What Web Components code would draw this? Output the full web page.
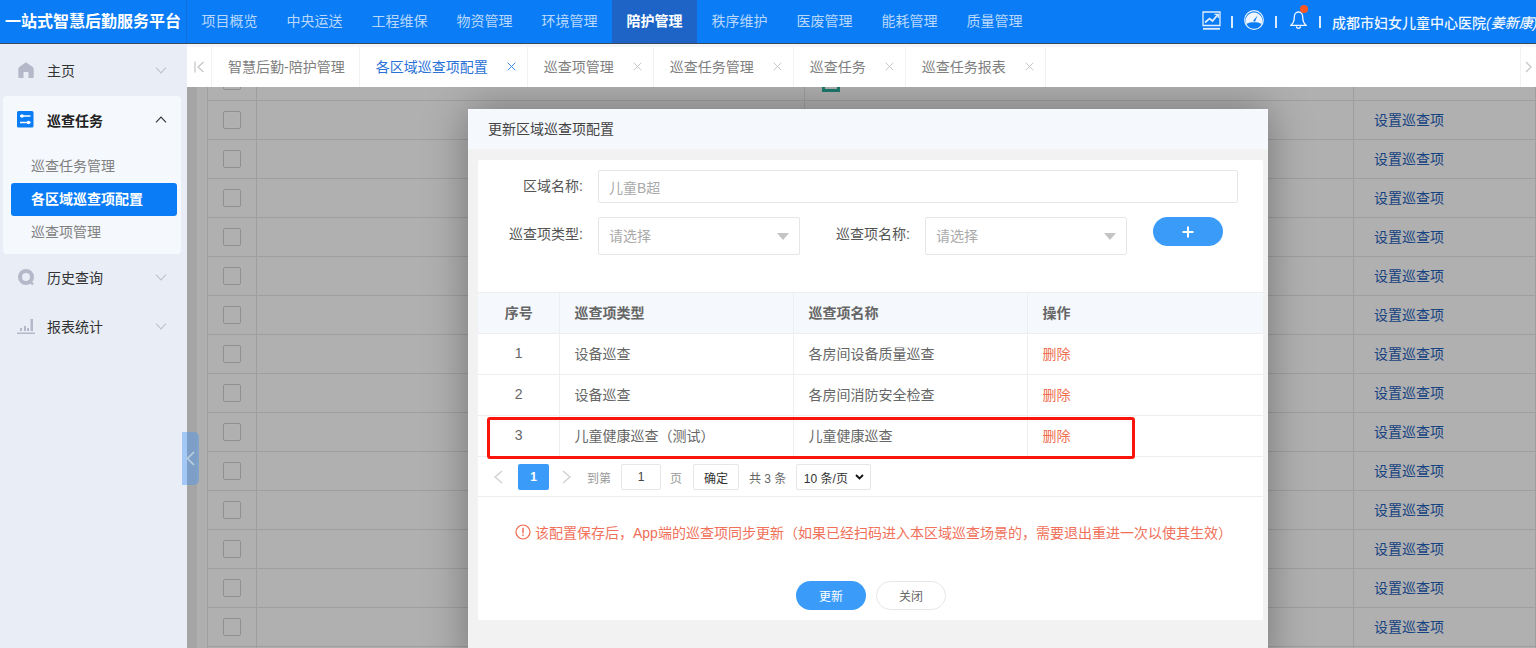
<!DOCTYPE html>
<html lang="zh"><head><meta charset="utf-8"><title>更新区域巡查项配置</title>
<style>
html,body{margin:0;height:100%;overflow:hidden}
body{font:14px "Liberation Sans","Noto Sans CJK SC",sans-serif;color:#666;background:#e9edf6}
app-shell{width:1536px;height:648px}
</style></head><body>
<app-shell>
  <app-header slot="header"></app-header>
  <side-nav slot="side"></side-nav>
  <tab-bar slot="tabs"></tab-bar>
  <grid-back slot="content"></grid-back>
  <area-modal slot="modal"></area-modal>
</app-shell>
<script>
const el=(name,html,setup)=>{customElements.define(name,class extends HTMLElement{
  connectedCallback(){ if(this.shadowRoot) return; const r=this.attachShadow({mode:'open'}); r.innerHTML=html; setup&&setup(r,this);} });};
const chev=(up)=>`<svg width="12" height="7" viewBox="0 0 12 7" fill="none" stroke="currentColor" stroke-width="1.1"><path d="${up?'M1 6.3 6 1l5 5.3':'M1 .7 6 6l5-5.3'}"/></svg>`;

el('app-shell',`<style>
:host{display:grid;grid-template-columns:187px 1fr;grid-template-rows:44px 43px 1fr;position:relative;overflow:hidden}
::slotted([slot=header]){grid-column:1/3}
::slotted([slot=side]){grid-row:2/4}
.body{grid-column:2;grid-row:3;position:relative;overflow:hidden;min-height:0}
.tabs{grid-column:2;grid-row:2;min-width:0;z-index:2}
.handle{position:absolute;left:182px;top:432px;width:17px;height:53px;background:rgba(70,150,245,.42);border-radius:0 5px 5px 0;display:flex;align-items:center;justify-content:center;color:rgba(215,225,235,.75);z-index:3}
</style>
<slot name="header"></slot><slot name="side"></slot>
<div class="tabs"><slot name="tabs"></slot></div>
<div class="body"><slot name="content"></slot><slot name="modal"></slot></div>
<div class="handle"><svg width="9" height="15" viewBox="0 0 9 15" fill="none" stroke="currentColor" stroke-width="1.5"><path d="M8 1 1.5 7.5 8 14"/></svg></div>`);

const navs=['项目概览','中央运送','工程维保','物资管理','环境管理','陪护管理','秩序维护','医废管理','能耗管理','质量管理'];
el('app-header',`<style>
:host{display:flex;height:44px;box-sizing:border-box;background:#0a7cf6;border-bottom:1px solid #3b4a5c;color:#fff}
.logo{width:187px;flex:none;box-sizing:border-box;font-size:16px;font-weight:700;line-height:43px;text-align:center;border-right:1px solid #0f6fdc;white-space:nowrap}
nav{display:flex}
a{width:85px;text-align:center;line-height:43px;color:#b8d8fd;flex:none}
a.on{background:#1d64c6;color:#fff;font-weight:700}
.right{margin-left:auto;display:flex;align-items:center;white-space:nowrap;width:335px;flex:none;overflow:hidden;box-sizing:border-box;padding:0 0 3px 1px}
.right>*{flex:none}
.sep{width:2px;height:12px;background:#dbe9fb;margin-top:3px}
.bell{position:relative;display:flex}
.bell i{position:absolute;left:10px;top:-5px;width:8px;height:8px;border-radius:50%;background:#ff5722}
.org{margin:3px 0 0 11px;color:#eef6ff;font-weight:500}
em{font-style:italic}
</style>
<div class="logo">一站式智慧后勤服务平台</div>
<nav>${navs.map(n=>`<a class="${n=='陪护管理'?'on':''}">${n}</a>`).join('')}</nav>
<div class="right">
<svg width="19" height="19" viewBox="0 0 19 19" fill="none" stroke="#e2eefe" stroke-width="1.3" style="margin-right:10px"><path d="M1 1h17v13.500H1z"/><path d="M1 17.800h17" stroke-width="1.800"/><path d="M3 11.500 7.500 7.500l3 2.500 5-6" stroke-width="1.700"/><path d="M12.500 3.400h3.800v3.600" stroke-width="1.300"/></svg>
<span class="sep" style="margin-right:11px"></span>
<svg width="20" height="20" viewBox="0 0 20 20" style="margin-right:11px"><circle cx="10" cy="10" r="9.300" fill="none" stroke="#e8f2ff" stroke-width="1.200"/><path d="M2.400 14A8 8 0 0 1 10 2.600 8 8 0 0 1 17.600 14C15.500 12.700 13 12.300 10 12.300S4.500 12.700 2.400 14z" fill="#f0f6ff"/><path d="M9 11 13.500 5.500 11 11.800z" fill="#0a7cf6"/></svg>
<span class="sep" style="margin-right:13px"></span>
<span class="bell" style="margin-right:12px"><svg width="17" height="20" viewBox="0 0 17 20" fill="none" stroke="#f0f6ff" stroke-width="1.300"><path d="M8.500 2C5.500 2 4.300 4.500 4.300 7c0 4-1 6.300-3.300 8.300h15c-2.300-2-3.300-4.300-3.300-8.300 0-2.500-1.200-5-4.200-5z"/><path d="M6.500 16.300a2 2 0 0 0 4 0"/></svg><i></i></span>
<span class="sep"></span>
<span class="org">成都市妇女儿童中心医院<em>(姜新康)</em></span>
</div>`);

el('side-nav',`<style>
:host{display:block;background:#e9edf6;color:#333;overflow:hidden;position:relative}
.row{display:flex;align-items:center;height:49px;padding:0 20px 3px 17px;box-sizing:border-box}
.row svg.i{width:18px;height:18px;margin-right:12px;flex:none}
.row span{flex:1}
.row .c{color:#bcc3cf;display:flex}
.home{height:52px;padding-bottom:0}
.card{background:#f5f8fd;border-radius:4px;margin:0 6px 0 3px;height:158px;box-sizing:border-box}
.card .row{height:48px;padding:0 14px 1px;font-weight:700;color:#222}
.card .row .c{color:#333}
.sub{padding:6px 4px 0 8px}
.sub a{display:block;height:33px;line-height:33px;padding-left:20px;color:#808080;border-radius:3px}
.sub a.on{background:#0a7cf6;color:#fff;font-weight:700}
</style>
<div class="row home"><svg class="i" viewBox="0 0 18 18"><path d="M9 1.200 2.600 5.800C1.700 6.500 1.300 7.300 1.300 8.400V16c0 .6.400 1 1 1H6.500v-5c0-.6.400-1 1-1h3c.6 0 1 .4 1 1v5h4.200c.6 0 1-.4 1-1V8.400c0-1.100-.4-1.900-1.300-2.600z" fill="#b4b9ca"/></svg><span>主页</span><i class="c">${chev()}</i></div>
<div class="card">
 <div class="row"><svg class="i" viewBox="0 0 18 18"><rect x="0" y="0" width="16.500" height="16.500" rx="1.500" fill="#0a7cf6"/><path d="M3 5h10.500M3 11.500h10.500" stroke="#fff" stroke-width="1.300"/><circle cx="5" cy="5" r="1.700" fill="#fff"/><circle cx="11.500" cy="11.500" r="1.700" fill="#fff"/></svg><span>巡查任务</span><i class="c">${chev(1)}</i></div>
 <div class="sub"><a>巡查任务管理</a><a class="on">各区域巡查项配置</a><a>巡查项管理</a></div>
</div>
<div class="row"><svg class="i" viewBox="0 0 18 18"><circle cx="9" cy="9" r="6" fill="none" stroke="#b4b9ca" stroke-width="4"/><path d="M12 12l4 4.500" stroke="#b4b9ca" stroke-width="2.500"/></svg><span>历史查询</span><i class="c">${chev()}</i></div>
<div class="row"><svg class="i" viewBox="0 0 18 18" fill="#b4b9ca"><path d="M0 15.500h18v1.500H0zM3 11h2v3H3zM7 9h2v5H7zM10 11h2v3h-2zM13.500 2h2.500v12h-2.500z"/></svg><span>报表统计</span><i class="c">${chev()}</i></div>`);

const tabs=[['智慧后勤-陪护管理',0],['各区域巡查项配置',1,1],['巡查项管理',1],['巡查任务管理',1],['巡查任务',1],['巡查任务报表',1]];
const x=`<svg width="9" height="9" viewBox="0 0 9 9" fill="none" stroke="currentColor" stroke-width="1"><path d="M.7.700l7.600 7.600M8.300.700.7 8.300"/></svg>`;
el('tab-bar',`<style>
:host{display:flex;height:43px;box-sizing:border-box;padding-top:3px;background:#f5f6f8;position:relative}
.wrap{display:flex;flex:1;background:#fff;min-width:0}
.l{width:25px;flex:none;display:flex;align-items:center;justify-content:center;color:#c4c4c4;border-right:1px solid #f2f2f2;box-sizing:border-box;background:#fff}
.t{display:flex;align-items:center;padding:0 11px 2px 16px;gap:19px;border-right:1px solid #f2f2f2;color:#808080;flex:none}
.t.first{padding-right:14px}
.t b{font-weight:400}
.t svg{color:#c8c8c8}
.t.on{color:#2a72d6}
.t.on svg{color:#3d8be8}
.fill{flex:1}
.r{width:15px;flex:none;border-left:1px solid #f2f2f2;display:flex;align-items:center;justify-content:center;color:#c4c4c4}
</style><div class="wrap">
<div class="l"><svg width="11" height="12" viewBox="0 0 11 12" fill="none" stroke="currentColor" stroke-width="1.200"><path d="M1 .5v11M9.500 1 4 6l5.500 5"/></svg></div>
${tabs.map(t=>`<div class="t ${t[2]?'on':''} ${t[1]?'':'first'}"><b>${t[0]}</b>${t[1]?x:''}</div>`).join('')}
<div class="fill"></div>
<div class="r"><svg width="7" height="12" viewBox="0 0 7 12" fill="none" stroke="currentColor" stroke-width="1.200"><path d="M1 1l5 5-5 5"/></svg></div>
</div>`);

el('grid-back',`<style>
:host{display:block;height:100%;background:linear-gradient(90deg,#ececec 10px,#fbfbfb 10px);overflow:hidden}
.t{margin:-25px 0 0 20px;display:grid;grid-template-columns:49px 548px 549px 1fr;border-left:1px solid #e4e4e4;background:#fcfcfc}
.c{height:38px;border-bottom:1px solid #e4e4e4;border-right:1px solid #e4e4e4;display:flex;align-items:center}
.c.k{justify-content:center}
.c.k i{display:block;width:16px;height:16px;border:1px solid #cfcfcf;border-radius:2px}
.c.a{padding:0 0 2px 20px;box-sizing:content-box;height:36px;color:#1f5fb8}
.ico{margin:3px 0 0 17px;width:18px;height:18px;border:3px solid #2cae9d;box-sizing:border-box}
</style><div class="t" id="t"></div>`,(r)=>{
 let h='';for(let i=0;i<16;i++){h+=`<div class="c k"><i></i></div><div class="c"></div><div class="c">${i==0?'<span class="ico"></span>':''}</div><div class="c a">${i&&i<15?'设置巡查项':''}</div>`}
 r.getElementById('t').innerHTML=h;});

el('area-modal',`<style>
:host{position:absolute;inset:0;display:block;background:rgba(0,0,0,.3);z-index:1}
.m{position:absolute;left:281px;top:22px;width:800px;height:560px;background:#f2f2f2;box-shadow:0 0 40px rgba(0,0,0,.35);color:#666}
.hd{height:40px;background:#f5f8fc;line-height:40px;padding-left:20px;color:#444}
.card{margin:11px 5px 0 10px;background:#fff;height:460px;border-radius:2px;position:relative;display:flex;flex-direction:column}
.form{height:132px;box-sizing:border-box;padding-top:10px}
.f{display:flex;align-items:flex-start}
label{width:105px;text-align:right;color:#555;margin-right:15px;flex:none;line-height:33px;white-space:nowrap}
.inp{box-sizing:border-box;border:1px solid #e6e6e6;border-radius:2px;color:#aaa;padding-left:10px;display:flex;align-items:center}
.f1 .inp{width:640px;height:33px}
.f2{margin-top:14px}
.f2 .inp{width:202px;height:38px;justify-content:space-between;padding:0 10px 2px 10px}
.f2 i{border:6px solid transparent;border-top:7px solid #c4c4c4;border-bottom:0;margin-top:2px}
.f2 label{line-height:35px}
.f2 label.b{width:110px;margin:0 15px 0 0}
.plus{width:70px;height:29px;border-radius:15px;background:#3a9cf8;margin-left:26px;display:flex;align-items:center;justify-content:center}
table{border-collapse:collapse;width:785px;table-layout:fixed;border-top:1px solid #e8ecf0}
th,td{border:1px solid #eceeef;height:41px;padding:0 15px 2px 15px;text-align:left;box-sizing:border-box;font-weight:400}
th{background:#f5f8fc;font-weight:700;color:#666}
tr>*:first-child{text-align:center;border-left:0;padding-left:16px}
tr>*:last-child{border-right:0}
td.d{color:#ef6f4f}
.pg{display:flex;align-items:center;height:40px;border-bottom:1px solid #eceeef;font-size:12px;color:#999;box-sizing:border-box;padding:1px 0 0 15px}
.pg .cur{width:31px;height:26px;background:#3a9cf8;color:#fff;font-weight:700;border-radius:2px;display:flex;align-items:center;justify-content:center;margin:0 13px 0 15px}
.pg .box{box-sizing:border-box;height:26px;border:1px solid #e6e6e6;border-radius:2px;display:flex;align-items:center;justify-content:center;color:#444}
.note{margin-top:25px;display:flex;align-items:center;color:#f0705a;padding-left:37px;white-space:nowrap;height:20px}
.btns{margin-top:39px;display:flex;justify-content:center;gap:10px;padding-left:1px}
.btns span{width:70px;height:29px;box-sizing:border-box;border-radius:15px;display:flex;align-items:center;justify-content:center;font-size:12px;padding-bottom:1px}
.u{background:#3a9cf8;color:#fff}
.c{border:1px solid #e6e6e6;color:#666;background:#fff}
.mark{position:absolute;left:9px;top:257px;width:648px;height:42px;box-sizing:border-box;border:3px solid #f9150c;border-radius:3px}
</style>
<div class="m">
 <div class="hd">更新区域巡查项配置</div>
 <div class="card">
  <div class="form">
   <div class="f f1"><label>区域名称:</label><div class="inp">儿童B超</div></div>
   <div class="f f2"><label>巡查项类型:</label><div class="inp">请选择<i></i></div><label class="b">巡查项名称:</label><div class="inp">请选择<i></i></div><div class="plus"><svg width="12" height="12" viewBox="0 0 12 12"><path d="M6 .5v11M.5 6h11" stroke="#fff" stroke-width="2"/></svg></div></div>
  </div>
  <table><colgroup><col style="width:81px"><col style="width:234px"><col style="width:234px"><col></colgroup>
  <tr><th>序号</th><th>巡查项类型</th><th>巡查项名称</th><th>操作</th></tr>
  <tr><td>1</td><td>设备巡查</td><td>各房间设备质量巡查</td><td class="d">删除</td></tr>
  <tr><td>2</td><td>设备巡查</td><td>各房间消防安全检查</td><td class="d">删除</td></tr>
  <tr><td>3</td><td>儿童健康巡查（测试）</td><td>儿童健康巡查</td><td class="d">删除</td></tr>
  </table>
  <div class="pg">
   <svg width="10" height="14" viewBox="0 0 10 14" fill="none" stroke="#d0d0d0" stroke-width="1.300"><path d="M9 1 2 7l7 6"/></svg>
   <span class="cur">1</span>
   <svg width="10" height="14" viewBox="0 0 10 14" fill="none" stroke="#d0d0d0" stroke-width="1.300"><path d="M1 1l7 6-7 6"/></svg>
   <span style="margin-left:15px">到第</span><span class="box" style="width:40px;margin:0 9px 0 10px">1</span><span>页</span>
   <span class="box" style="width:46px;margin:0 10px 0 11px;color:#333">确定</span><span style="color:#666">共 3 条</span>
   <span class="box" style="width:75px;margin-left:10px;gap:7px;color:#333">10 条/页<svg width="9" height="6" viewBox="0 0 9 6" fill="none" stroke="#111" stroke-width="1.800"><path d="M1 1l3.500 3.500L8 1"/></svg></span>
  </div>
  <div class="note"><svg width="16" height="16" viewBox="0 0 16 16" style="margin-right:4px;flex:none"><circle cx="8" cy="8" r="7" fill="none" stroke="#f0654a" stroke-width="1.200"/><path d="M8 3.800v5.400M8 10.600v1.500" stroke="#f0654a" stroke-width="1.400"/></svg>该配置保存后，App端的巡查项同步更新（如果已经扫码进入本区域巡查场景的，需要退出重进一次以使其生效）</div>
  <div class="btns"><span class="u">更新</span><span class="c">关闭</span></div>
  <div class="mark"></div>
 </div>
</div>`);
</script></body></html>
